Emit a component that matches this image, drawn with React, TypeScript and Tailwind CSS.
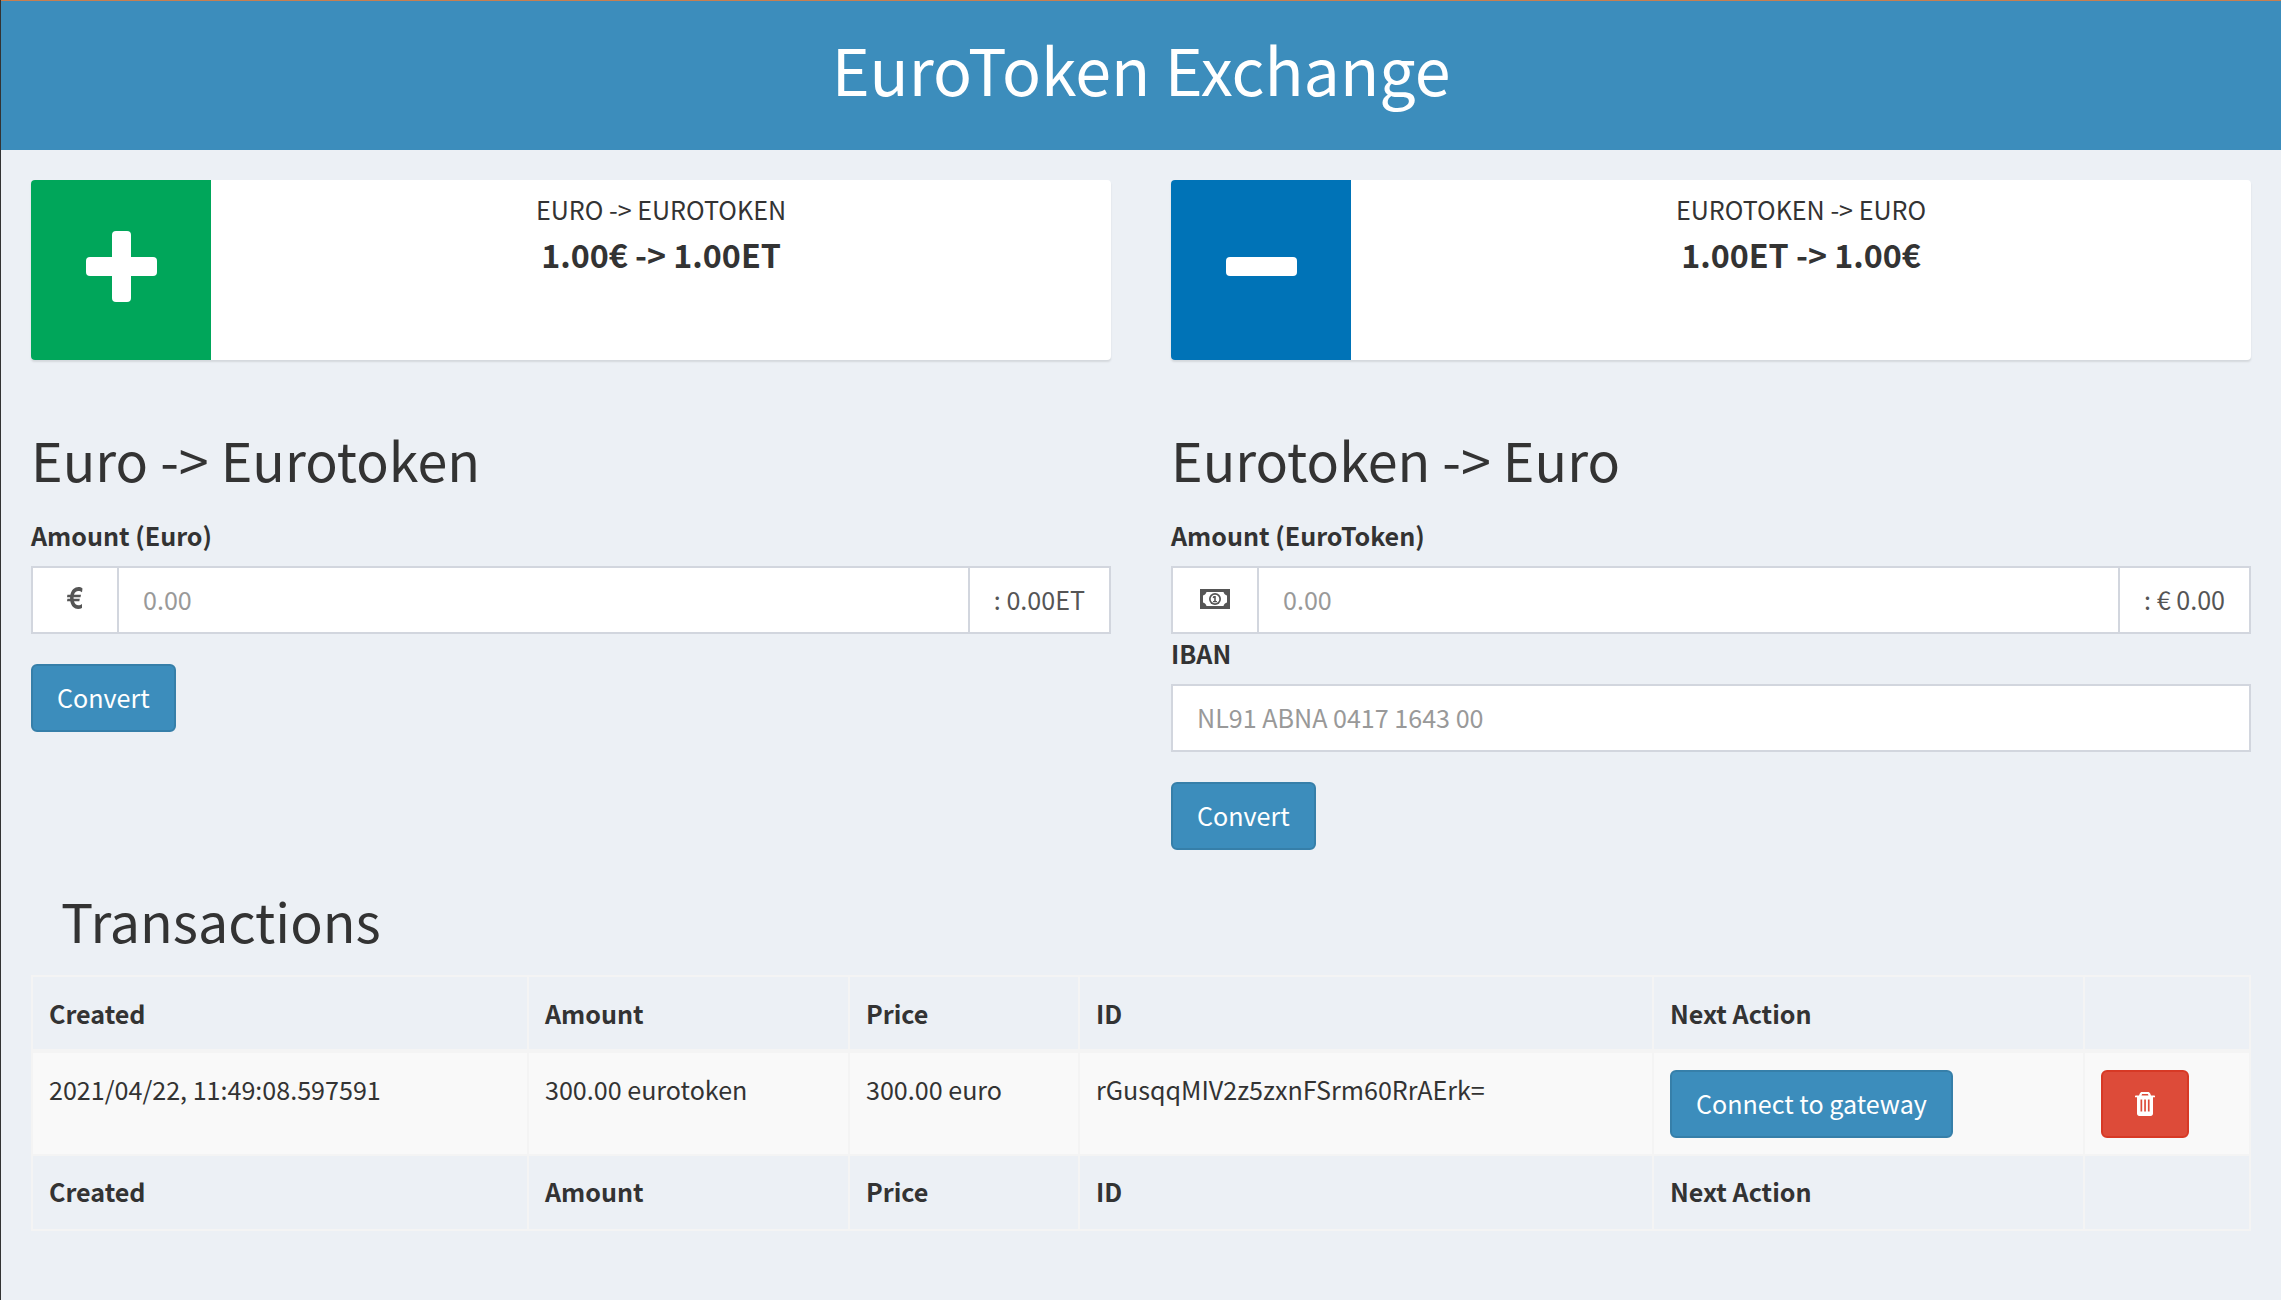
const font = "font-['Noto_Sans_CJK_JP','Noto_Sans',sans-serif]"

function PlusIcon() {
  return (
    <svg viewBox="0 0 71 71" className="w-[71px] h-[71px] -mt-[7px]" fill="#fff">
      <rect x="26" y="0" width="19" height="71" rx="4" />
      <rect x="0" y="26" width="71" height="19" rx="4" />
    </svg>
  )
}

function MinusIcon() {
  return (
    <svg viewBox="0 0 71 19" className="w-[71px] h-[19px] -mt-[7px]" fill="#fff">
      <rect x="0" y="0" width="71" height="19" rx="4" />
    </svg>
  )
}

function EuroIcon() {
  return (
    <svg viewBox="0 0 16 18" className="w-[16px] h-[22px] -mt-[4px]" preserveAspectRatio="none" fill="#555">
      <path d="M15.500 1.200 15 4.300c-1-.6-2.400-1-3.700-1-2 0-3.600 1-4.300 3h7l-.5 2H6.600v1.400h6.200l-.5 2H7c.7 2.100 2.300 3.200 4.400 3.200 1.300 0 2.600-.4 3.600-1v3.200c-1.100.6-2.500.9-3.900.9-3.800 0-6.800-2.200-7.800-6.300H0l.4-2h2.700V8.300H0l.4-2h3C4.500 2.300 7.600 0 11.400 0c1.500 0 3 .4 4.100 1.200z" />
    </svg>
  )
}

function TrashIcon() {
  return (
    <svg viewBox="0 0 20 24" className="w-[20px] h-[24px]" fill="#fff">
      <path
        fillRule="evenodd"
        d="M7 0h6c1 0 1.800.6 2.200 1.500L16 3.500h3.300c.4 0 .7.300.7.700v1.100h-2v16.200c0 1.400-1 2.500-2.300 2.500H4.300C3 24 2 22.900 2 21.500V5.300H0V4.200c0-.4.300-.7.700-.7H4l.8-2C5.200.6 6 0 7 0zM6.500 3.500h7L13 2.200c0-.1-.2-.2-.3-.2H7.300c-.1 0-.3.100-.3.200zM5.500 7.500v12h1.700v-12zM9.200 7.500v12h1.700v-12zM12.900 7.500v12h1.700v-12z"
      />
    </svg>
  )
}

function MoneyIcon() {
  return (
    <svg viewBox="0 0 30 20" className="w-[30px] h-[20px] -mt-[2px]" fill="#555">
      <path
        fillRule="evenodd"
        d="M0 0h30v20H0zM6.500 3C6 5 4.800 6 3 6.500v7C4.800 14 6 15 6.500 17h17c.5-2 1.700-3 3.500-3.500v-7C25.200 6 24 5 23.500 3z"
      />
      <circle cx="15" cy="10" r="6" />
      <circle cx="15" cy="10" r="4.300" fill="#fff" />
      <path d="M13.600 7h2.200v5h1.200v1.300h-4V12h1.200V8.800l-1 .5-.6-1.100z" />
    </svg>
  )
}

function RateCard({ color, icon, title, rate }: { color: string; icon: React.ReactNode; title: string; rate: string }) {
  return (
    <div className="flex h-[180px] bg-white rounded-[4px] overflow-hidden shadow-[0_2px_2px_rgba(0,0,0,0.1)]">
      <div className={`w-[180px] flex items-center justify-center ${color}`}>{icon}</div>
      <div className="flex-1 text-center pt-[9px]">
        <div className="text-[25.1px] leading-[40px]">{title}</div>
        <div className="text-[32.25px] leading-[50px] font-bold">{rate}</div>
      </div>
    </div>
  )
}

function AmountGroup({ addon, suffix }: { addon: React.ReactNode; suffix: string }) {
  return (
    <div className="flex h-[68px] border-2 border-[#d2d6de] bg-white">
      <div className="w-[86px] flex items-center justify-center border-r-2 border-[#d2d6de]">{addon}</div>
      <input
        placeholder="0.00"
        className="flex-1 min-w-0 px-6 text-[25.1px] outline-none placeholder:text-[#999]"
      />
      <div className="px-6 flex items-center border-l-2 border-[#d2d6de] text-[25.1px] text-[#555]">{suffix}</div>
    </div>
  )
}

function ConvertButton() {
  return (
    <button className="h-[68px] px-6 bg-[#3c8dbc] border-2 border-[#367fa9] rounded-[6px] text-white text-[25.1px]">
      Convert
    </button>
  )
}

const heads = ['Created', 'Amount', 'Price', 'ID', 'Next Action', '']

function HeadRow({ foot }: { foot?: boolean }) {
  return (
    <tr className="h-[75px]">
      {heads.map((h, i) => (
        <th
          key={i}
          className={`border-2 border-[#f4f4f4] px-4 text-left font-bold text-[25.1px] leading-[40px] ${foot ? 'pb-[4px]' : ''}`}
        >
          {h}
        </th>
      ))}
    </tr>
  )
}

export default function App() {
  const cell = 'border-2 border-[#f4f4f4] px-4 pt-4 align-top text-[25.1px] leading-[40px]'
  return (
    <div className={`${font} h-[1300px] bg-[#ecf0f5] border-l border-[#333] text-[#333]`}>
      <header className="h-[150px] bg-[#3c8dbc] border-t border-[#c87f50] flex items-center justify-center text-white text-[64.5px] pb-[14px]">
        EuroToken Exchange
      </header>

      <div className="px-[30px] pt-[30px]">
        <div className="grid grid-cols-2 gap-[60px]">
          <div>
            <RateCard color="bg-[#00a65a]" icon={<PlusIcon />} title="EURO -> EUROTOKEN" rate="1.00€ -> 1.00ET" />
            <h2 className="text-[53.75px] leading-[66px] mt-[66px] mb-[23px]">Euro -&gt; Eurotoken</h2>
            <label className="block font-bold text-[25.1px] leading-[40px] mb-[11px]">Amount (Euro)</label>
            <AmountGroup addon={<EuroIcon />} suffix=": 0.00ET" />
            <div className="mt-[30px]">
              <ConvertButton />
            </div>
          </div>
          <div>
            <RateCard color="bg-[#0073b7]" icon={<MinusIcon />} title="EUROTOKEN -> EURO" rate="1.00ET -> 1.00€" />
            <h2 className="text-[53.75px] leading-[66px] mt-[66px] mb-[23px]">Eurotoken -&gt; Euro</h2>
            <label className="block font-bold text-[25.1px] leading-[40px] mb-[11px]">Amount (EuroToken)</label>
            <AmountGroup addon={<MoneyIcon />} suffix=": € 0.00" />
            <label className="block font-bold text-[25.1px] leading-[40px] -mt-[1px] mb-[11px]">IBAN</label>
            <input
              placeholder="NL91 ABNA 0417 1643 00"
              className="block w-full h-[68px] px-6 pb-[2px] border-2 border-[#d2d6de] bg-white text-[25.1px] outline-none placeholder:text-[#999]"
            />
            <div className="mt-[30px]">
              <ConvertButton />
            </div>
          </div>
        </div>

        <h2 className="text-[53.75px] leading-[66px] ml-[30px] mt-[37px] mb-[22px]">Transactions</h2>

        <table className="w-full table-fixed border-collapse">
          <colgroup>
            <col className="w-[496px]" />
            <col className="w-[321px]" />
            <col className="w-[230px]" />
            <col className="w-[574px]" />
            <col className="w-[431px]" />
            <col />
          </colgroup>
          <thead>
            <HeadRow />
          </thead>
          <tbody>
            <tr className="bg-[#f9f9f9] h-[104px] border-t-[4px] border-[#f4f4f4]">
              <td className={cell}>2021/04/22, 11:49:08.597591</td>
              <td className={cell}>300.00 eurotoken</td>
              <td className={cell}>300.00 euro</td>
              <td className={cell}>rGusqqMIV2z5zxnFSrm60RrAErk=</td>
              <td className={cell}>
                <button className="block mt-[1px] h-[68px] px-6 pb-[2px] bg-[#3c8dbc] border-2 border-[#367fa9] rounded-[6px] text-white text-[25.1px]">
                  Connect to gateway
                </button>
              </td>
              <td className={cell}>
                <button className="mt-[1px] w-[88px] h-[68px] flex items-center justify-center bg-[#dd4b39] border-2 border-[#d73925] rounded-[6px]">
                  <TrashIcon />
                </button>
              </td>
            </tr>
          </tbody>
          <tfoot>
            <HeadRow foot />
          </tfoot>
        </table>
      </div>
    </div>
  )
}
